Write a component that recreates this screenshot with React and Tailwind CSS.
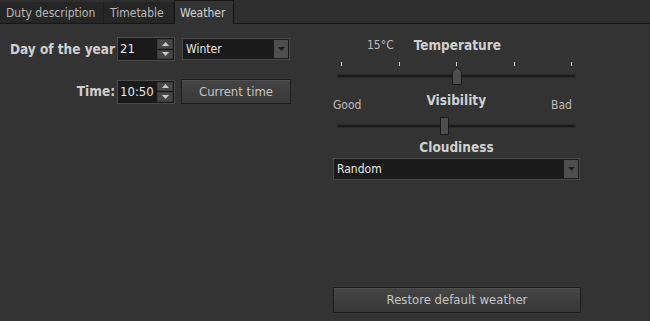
import React from "react";

const font = { fontFamily: '"DejaVu Sans Condensed", "DejaVu Sans", Tahoma, sans-serif' };

function SpinBox({ value }) {
  return (
    <div className="flex h-[24px] w-[58px] border border-[#4a4a4a] bg-[#1a1a1a]">
      <div className="flex flex-1 items-center pl-[2px] text-[13px] text-[#e8e8e8]">{value}</div>
      <div className="flex w-[17px] flex-col gap-[1px] py-[1px] pr-[1px]">
        <div className="flex flex-1 items-center justify-center border border-[#3a3a3a] bg-[#474747]">
          <svg width="7" height="4" viewBox="0 0 7 4"><path d="M0 4 L3.5 0 L7 4Z" fill="#c8c8c8" /></svg>
        </div>
        <div className="flex flex-1 items-center justify-center border border-[#3a3a3a] bg-[#474747]">
          <svg width="7" height="4" viewBox="0 0 7 4"><path d="M0 0 L3.5 4 L7 0Z" fill="#c8c8c8" /></svg>
        </div>
      </div>
    </div>
  );
}

function Combo({ value, className }) {
  return (
    <div className={"flex h-[22px] border border-[#4a4a4a] bg-[#1a1a1a] " + className}>
      <div className="flex flex-1 items-center pl-[3px] text-[12px] text-[#e8e8e8]">{value}</div>
      <div className="m-[1px] flex w-[14px] items-center justify-center bg-[#4e4e4e]">
        <svg width="7" height="4" viewBox="0 0 7 4"><path d="M0 0 L3.5 4 L7 0Z" fill="#1e1e1e" /></svg>
      </div>
    </div>
  );
}

function Button({ children, className }) {
  return (
    <div className={"flex items-center justify-center border border-[#1c1c1c] bg-gradient-to-b from-[#454545] to-[#383838] text-[13px] text-[#c4c4c4] shadow-[inset_0_1px_0_#505050] " + className}>
      {children}
    </div>
  );
}

function Groove() {
  return <div className="h-[4px] w-full border border-[#2a2a2a] bg-[#1b1b1b]" />;
}

export default function App() {
  return (
    <div style={font} className="flex h-[321px] w-[650px] flex-col bg-[#333333] text-[#c8c8c8]">
      <div className="flex h-[24px] items-end border-b border-[#161616] bg-[#2f2f2f]">
        <div className="flex h-[21px] w-[104px] items-center border-r border-[#1e1e1e] bg-[#262626] pl-[6px] text-[12px] text-[#b8b8b8]">Duty description</div>
        <div className="flex h-[21px] w-[70px] items-center border-r border-[#1e1e1e] bg-[#262626] pl-[6px] text-[12px] text-[#b8b8b8]">Timetable</div>
        <div className="mb-[-1px] flex h-[24px] w-[60px] items-center border-x border-t border-[#161616] bg-[#333333] pl-[5px] text-[12px] text-[#d4d4d4]">Weather</div>
      </div>
      <div className="flex flex-1 border-r border-[#2a2a2a]">
        <div className="flex w-[333px] flex-col pt-[13px]">
          <div className="flex items-center">
            <div className="w-[117px] pr-[2px] text-right text-[13.5px] font-bold text-[#cfcfcf]">Day of the year</div>
            <SpinBox value="21" />
            <Combo value="Winter" className="ml-[7px] w-[108px]" />
          </div>
          <div className="mt-[18px] flex items-center">
            <div className="w-[117px] pr-[2px] text-right text-[13.5px] font-bold text-[#cfcfcf]">Time:</div>
            <SpinBox value="10:50" />
            <Button className="ml-[6px] h-[25px] w-[110px]">Current time</Button>
          </div>
        </div>
        <div className="flex w-[247px] flex-col pt-[13px]">
          <div className="flex h-[16px] items-center">
            <span className="ml-[34px] text-[12px] text-[#bcbcbc]">15°C</span>
            <span className="ml-[20px] text-[13.5px] font-bold text-[#cfcfcf]">Temperature</span>
          </div>
          <div className="mt-[9px] flex justify-between px-[8px]">
            <div className="h-[4px] w-[1px] bg-[#d0d0d0]" />
            <div className="h-[4px] w-[1px] bg-[#d0d0d0]" />
            <div className="h-[4px] w-[1px] bg-[#d0d0d0]" />
            <div className="h-[4px] w-[1px] bg-[#d0d0d0]" />
            <div className="h-[4px] w-[1px] bg-[#d0d0d0]" />
          </div>
          <div className="relative mt-[1px] flex h-[18px] items-center px-[4px]">
            <Groove />
            <svg className="absolute left-[119px] top-0" width="10" height="18" viewBox="0 0 10 18">
              <path d="M0.5 4.5 L5 0.5 L9.5 4.5 L9.5 17.5 L0.5 17.5Z" fill="#4e4e4e" stroke="#1a1a1a" />
            </svg>
          </div>
          <div className="mt-[13px] flex h-[16px] items-end justify-between">
            <span className="text-[12px] text-[#bcbcbc]">Good</span>
            <span className="mb-[4px] text-[13.5px] font-bold text-[#cfcfcf]">Visibility</span>
            <span className="pr-[8px] text-[12px] text-[#bcbcbc]">Bad</span>
          </div>
          <div className="relative mt-[3px] flex h-[18px] items-center px-[4px]">
            <Groove />
            <div className="absolute left-[107px] top-0 h-[18px] w-[9px] border border-[#1a1a1a] bg-[#4e4e4e]" />
          </div>
          <div className="mt-[2px] text-center text-[13.5px] font-bold text-[#cfcfcf]">Cloudiness</div>
          <Combo value="Random" className="mt-[1px] w-[247px]" />
          <div className="flex-1" />
          <Button className="mb-[8px] h-[26px] w-[248px]">Restore default weather</Button>
        </div>
      </div>
    </div>
  );
}
